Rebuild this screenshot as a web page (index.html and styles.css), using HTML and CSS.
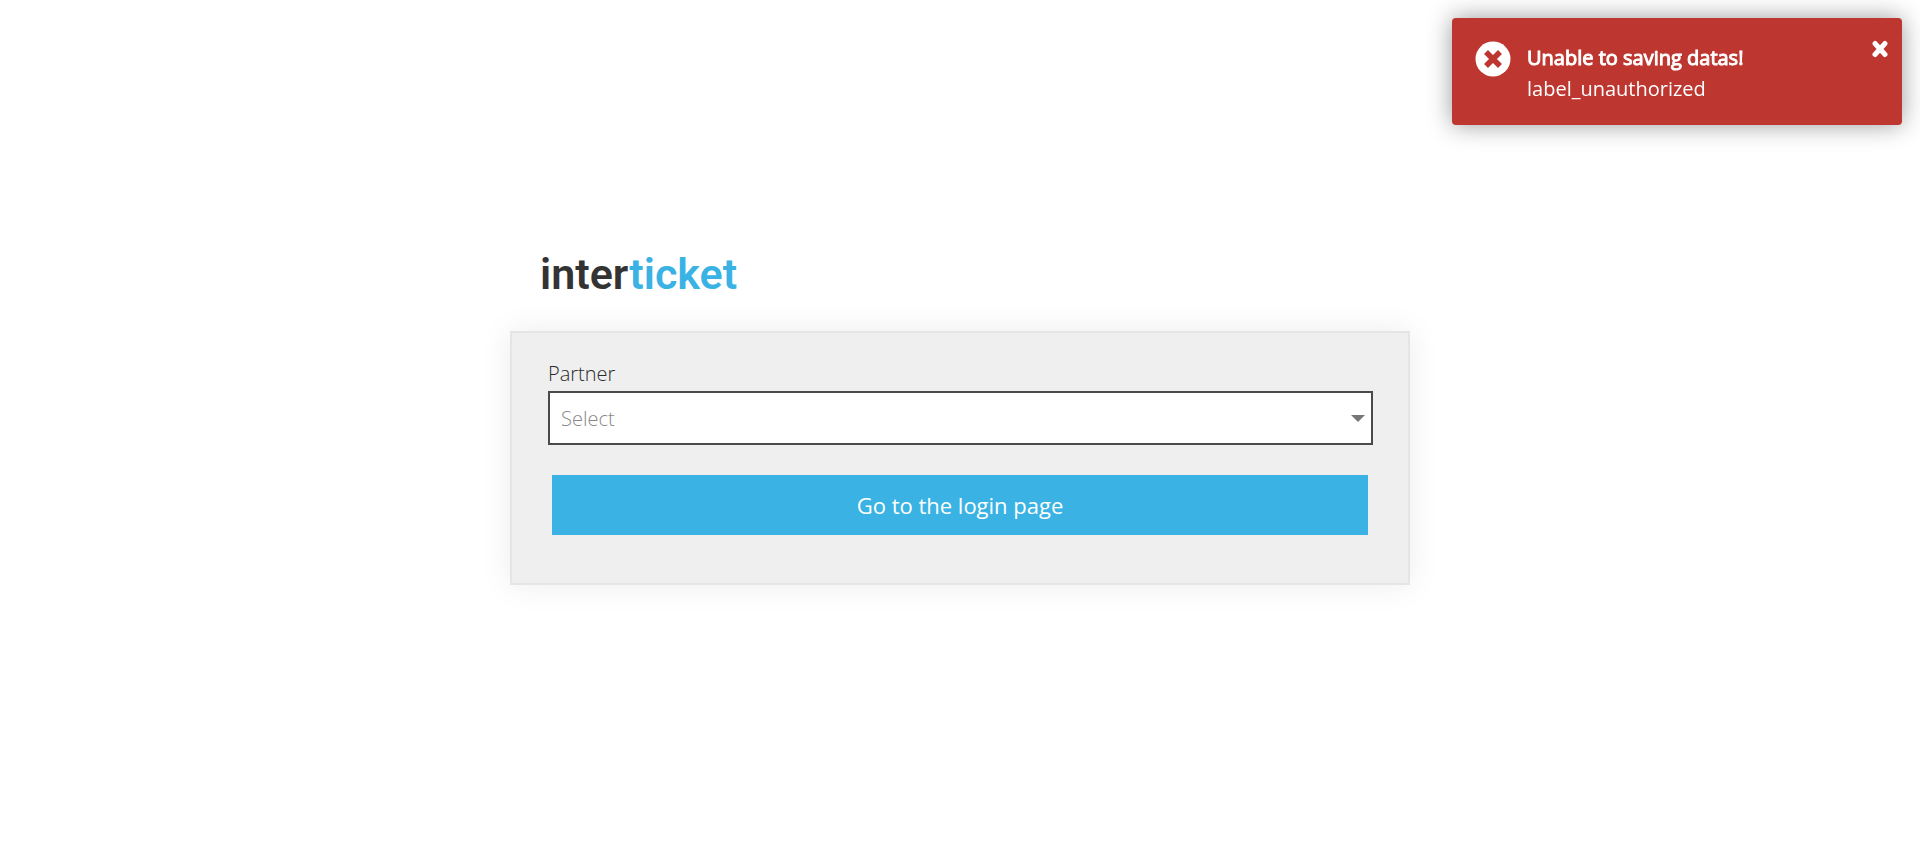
FILE: index.html
```html
<!DOCTYPE html>
<html lang="en">
<head>
<meta charset="utf-8">
<meta name="viewport" content="width=device-width, initial-scale=1">
<title>Interticket</title>
<link rel="stylesheet" href="styles.css">
</head>
<body>
<main class="login">
  <h1 class="logo">inter<span class="logo-accent">ticket</span></h1>
  <form class="card">
    <div class="field">
      <label class="field-label" for="partner">Partner</label>
      <div class="select-wrap">
        <select class="select" id="partner">
          <option>Select</option>
        </select>
        <svg class="caret" width="14" height="7" viewBox="0 0 14 7" aria-hidden="true"><path d="M0 0h14L7 7z" fill="#777"/></svg>
      </div>
    </div>
    <button class="submit" type="button">Go to the login page</button>
  </form>
</main>
<div class="toast" role="alert">
  <svg class="toast-icon" width="36" height="36" viewBox="0 0 36 36" aria-hidden="true">
    <circle cx="18" cy="18" r="17.5" fill="#fff"/>
    <path d="M13 13 23 23M23 13 13 23" stroke="#bd362f" stroke-width="5.6" stroke-linecap="square" fill="none"/>
  </svg>
  <div class="toast-text">
    <strong class="toast-title">Unable to saving datas!</strong>
    <p class="toast-message">label_unauthorized</p>
  </div>
  <button class="toast-close" type="button" aria-label="Close">
    <svg width="16" height="18" viewBox="0 0 16 18" aria-hidden="true"><path d="M3 3.5 13 14.5M13 3.5 3 14.5" stroke="#fff" stroke-width="5" stroke-linecap="round"/></svg>
  </button>
</div>
</body>
</html>
```
FILE: styles.css
```css
* {
  box-sizing: border-box;
}

body {
  min-height: 100vh;
  margin: 0;
  background: #fff;
  color: #2b2b2b;
  font: 400 20px/30px "Open Sans", sans-serif;
}

.login {
  width: 100%;
  max-width: 900px;
  margin: 0 auto;
  padding-top: 244px;
}

.logo {
  margin: 0 0 27px;
  padding-left: 30px;
  color: #333;
  font: 600 43px/60px Roboto, sans-serif;
}

.logo-accent {
  color: #3ab3e4;
}

.card {
  display: flex;
  flex-direction: column;
  gap: 30px;
  padding: 26px 35px 48px 36px;
  border: 2px solid #e5e5e5;
  background: #efefef;
  box-shadow: 0 0 30px rgba(0, 0, 0, 0.08);
}

.field-label {
  display: block;
  margin-bottom: 2px;
  font-weight: 300;
}

.select-wrap {
  display: grid;
  align-items: center;
}

.select,
.caret {
  grid-area: 1 / 1;
}

.select {
  appearance: none;
  width: 100%;
  height: 54px;
  padding: 2px 32px 0 11px;
  border: 2px solid #4a4a4a;
  border-radius: 0;
  background: #fff;
  color: #888;
  font: inherit;
  font-weight: 300;
}

.caret {
  justify-self: end;
  margin-right: 8px;
  pointer-events: none;
}

.submit {
  height: 60px;
  margin: 0 5px 0 4px;
  padding: 0;
  border: 0;
  background: #3ab3e4;
  color: #fff;
  font: inherit;
  font-size: 22px;
}

.toast {
  position: fixed;
  top: 18px;
  right: 18px;
  display: flex;
  align-items: flex-start;
  gap: 16px;
  width: 450px;
  max-width: calc(100% - 36px);
  padding: 22px 14px 21px 23px;
  border-radius: 4px;
  background: #bd362f;
  color: #fff;
  line-height: 31px;
  box-shadow: 0 0 24px rgba(0, 0, 0, 0.4);
}

.toast-icon {
  margin-top: 1px;
}

.toast-text {
  flex: 1;
  padding-top: 2px;
}

.toast-title {
  display: block;
  font-weight: 400;
  -webkit-text-stroke: 1px #fff;
}

.toast-message {
  margin: 0;
}

.toast-close {
  display: flex;
  margin: 0;
  padding: 0;
  border: 0;
  background: none;
}
```
